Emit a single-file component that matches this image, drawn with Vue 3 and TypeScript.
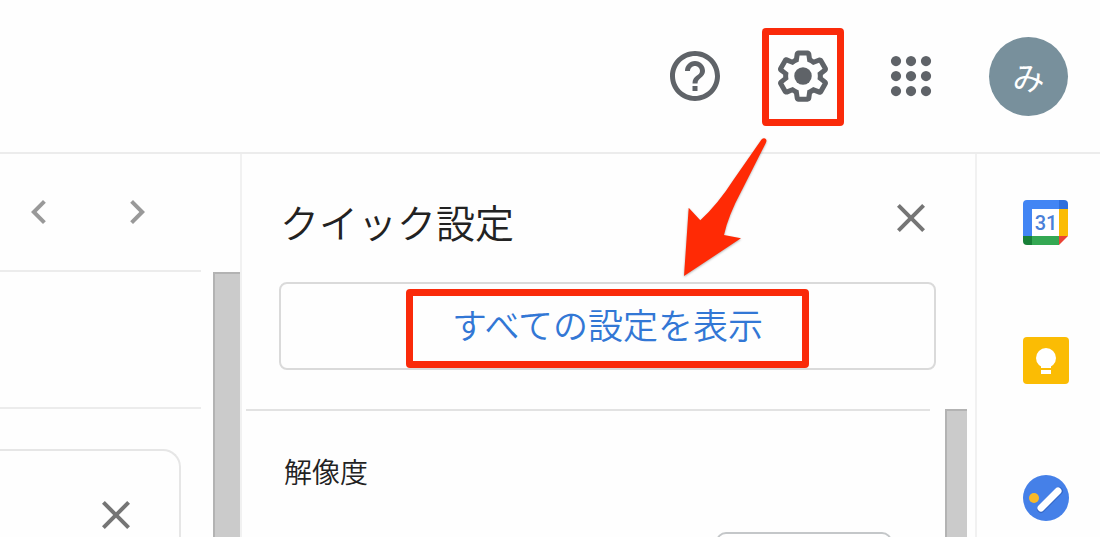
<script setup lang="ts">
interface AddOn {
  id: 'calendar' | 'keep' | 'tasks'
  label: string
}

const addOns: AddOn[] = [
  { id: 'calendar', label: 'カレンダー' },
  { id: 'keep', label: 'Keep' },
  { id: 'tasks', label: 'ToDo リスト' },
]

const dots: number[] = [6, 12, 18]
const closePath = 'M19 6.41 17.59 5 12 10.59 6.41 5 5 6.41 10.59 12 5 17.59 6.41 19 12 13.41 17.59 19 19 17.59 13.41 12z'
</script>

<template>
  <div class="page">
    <header class="topbar">
      <button class="icon-btn large" type="button" aria-label="サポート">
        <svg viewBox="0 0 24 24">
          <path d="M11 18h2v-2h-2v2zm1-16C6.48 2 2 6.48 2 12s4.48 10 10 10 10-4.48 10-10S17.52 2 12 2zm0 18c-4.41 0-8-3.59-8-8s3.59-8 8-8 8 3.59 8 8-3.59 8-8 8zm0-14c-2.21 0-4 1.79-4 4h2c0-1.1.9-2 2-2s2 .9 2 2c0 2-3 1.75-3 5h2c0-2.25 3-2.5 3-5 0-2.21-1.79-4-4-4z" />
        </svg>
      </button>
      <div class="gear-wrap">
        <button class="icon-btn large" type="button" aria-label="設定">
          <svg viewBox="0 0 24 24">
            <path d="M13.85 22.25h-3.7c-.74 0-1.36-.54-1.45-1.27l-.27-1.89c-.27-.14-.53-.29-.79-.46l-1.8.72c-.7.26-1.47-.03-1.81-.65L2.2 15.53c-.35-.66-.2-1.44.36-1.88l1.53-1.19c-.01-.15-.02-.3-.02-.46 0-.15.01-.31.02-.46l-1.52-1.19c-.59-.45-.74-1.26-.37-1.88l1.85-3.19c.34-.62 1.11-.9 1.79-.63l1.81.73c.26-.17.52-.32.78-.46l.27-1.91c.09-.7.71-1.25 1.44-1.25h3.7c.74 0 1.36.54 1.45 1.27l.27 1.89c.27.14.53.29.79.46l1.8-.72c.71-.26 1.48.03 1.82.65l1.84 3.18c.36.66.2 1.44-.36 1.88l-1.52 1.19c.01.15.02.3.02.46s-.01.31-.02.46l1.52 1.19c.56.45.72 1.23.37 1.86l-1.86 3.22c-.34.62-1.11.9-1.8.63l-1.8-.72c-.26.17-.52.32-.78.46l-.27 1.91c-.1.68-.72 1.22-1.46 1.22zm-3.23-2h2.76l.37-2.55.53-.22c.44-.18.88-.44 1.34-.78l.45-.34 2.38.96 1.38-2.4-2.03-1.58.07-.56c.03-.26.06-.51.06-.78s-.03-.53-.06-.78l-.07-.56 2.03-1.58-1.39-2.4-2.39.96-.45-.35c-.42-.32-.87-.58-1.33-.77l-.52-.22-.37-2.55h-2.76l-.37 2.55-.53.21c-.44.19-.88.44-1.34.79l-.45.33-2.38-.95-1.39 2.39 2.03 1.58-.07.56a7 7 0 0 0-.06.79c0 .26.02.53.06.78l.07.56-2.03 1.58 1.38 2.4 2.39-.96.45.35c.43.33.86.58 1.33.77l.53.22.38 2.55z" />
            <circle cx="12" cy="12" r="3.5" />
          </svg>
        </button>
        <span class="gear-mark"></span>
        <svg class="arrow" viewBox="0 0 100 156" aria-hidden="true">
          <path d="M8 146 12.700 77.700 24.300 90.300Q42 74 58 49L85.500 9.500Q88 7 90 9.200 91 10.800 89.800 13L66 60Q52 86 48 105L65 108.300Z" />
        </svg>
      </div>
      <button class="icon-btn large" type="button" aria-label="Google アプリ">
        <svg viewBox="0 0 24 24">
          <template v-for="y in dots" :key="y">
            <circle v-for="x in dots" :key="x" :cx="x" :cy="y" r="2.050" />
          </template>
        </svg>
      </button>
      <button class="avatar" type="button">み</button>
    </header>

    <div class="body">
      <section class="mail">
        <div class="mail-content">
          <div class="pager">
            <button class="icon-btn" type="button" aria-label="前へ">
              <svg viewBox="0 0 24 24"><path d="M15.410 7.410 14 6l-6 6 6 6 1.410-1.410L10.830 12z" /></svg>
            </button>
            <button class="icon-btn" type="button" aria-label="次へ">
              <svg viewBox="0 0 24 24"><path d="M10 6 8.590 7.410 13.170 12l-4.580 4.590L10 18l6-6z" /></svg>
            </button>
          </div>
          <div class="tabs"></div>
          <div class="notice">
            <button class="icon-btn close" type="button" aria-label="閉じる">
              <svg viewBox="0 0 24 24"><path :d="closePath" /></svg>
            </button>
          </div>
        </div>
        <div class="scrollbar mail-scroll"></div>
      </section>

      <section class="panel">
        <div class="panel-head">
          <h2>クイック設定</h2>
          <button class="icon-btn close" type="button" aria-label="クイック設定を閉じる">
            <svg viewBox="0 0 24 24"><path :d="closePath" /></svg>
          </button>
        </div>
        <button class="all-settings" type="button"><span>すべての設定を表示</span></button>
        <div class="options">
          <div class="options-content">
            <h3>解像度</h3>
            <div class="preview"></div>
          </div>
          <div class="scrollbar"></div>
        </div>
      </section>

      <aside class="rail">
        <button v-for="item in addOns" :key="item.id" class="icon-btn" type="button" :aria-label="item.label">
          <svg v-if="item.id === 'calendar'" viewBox="0 0 48 48">
            <path fill="#4285f4" d="M5 1h32v9H10v27H1V5a4 4 0 0 1 4-4z" />
            <path fill="#2f6fdc" d="M37 1h5a4 4 0 0 1 4 4v5h-9z" />
            <path fill="#fbbc04" d="M37 10h9v27h-9z" />
            <path fill="#34a853" d="M10 37h27v9H10z" />
            <path fill="#188038" d="M1 37h9v9H5a4 4 0 0 1-4-4z" />
            <path fill="#ea4335" d="M37 37h9l-9 9z" />
            <path fill="#fff" d="M10 10h27v27H10z" />
            <text x="24" y="31" text-anchor="middle">31</text>
          </svg>
          <svg v-else-if="item.id === 'keep'" viewBox="0 0 48 48">
            <rect x="1" y="0" width="46" height="47" rx="4" fill="#fbbc04" />
            <circle cx="24" cy="21" r="10" fill="#fff" />
            <path fill="#fff" d="M19 27h10v4H19zM19 33h10v4H19z" />
          </svg>
          <svg v-else viewBox="0 0 48 48">
            <circle cx="24" cy="23" r="23" fill="#4580e8" />
            <path d="M19 34 37 16" stroke="#3568c9" stroke-width="8" stroke-linecap="round" />
            <path d="M19 33 36 16" stroke="#fff" stroke-width="7" stroke-linecap="round" />
            <circle cx="12" cy="23" r="5" fill="#f9b928" />
          </svg>
        </button>
      </aside>
    </div>
  </div>
</template>

<style>
body {
  margin: 0;
}
</style>

<style scoped>
.page {
  display: flex;
  flex-direction: column;
  height: 100vh;
  overflow: hidden;
  background: #fefefe;
  color: #222;
  font-family: "Noto Sans CJK JP", sans-serif;
}

button {
  padding: 0;
  border: 0;
  background: none;
  font: inherit;
  cursor: pointer;
}

h2,
h3 {
  margin: 0;
  font-weight: 350;
}

svg {
  display: block;
}

.topbar {
  display: flex;
  flex: none;
  align-items: center;
  justify-content: flex-end;
  gap: 48px;
  box-sizing: border-box;
  height: 154px;
  padding-right: 32px;
  border-bottom: 2px solid #ececec;
}

.icon-btn {
  flex: none;
  width: 48px;
  height: 48px;
}

.icon-btn svg {
  width: 100%;
  height: 100%;
}

.large {
  width: 60px;
  height: 60px;
  fill: #5f6368;
}

.gear-wrap {
  position: relative;
  z-index: 1;
  height: 60px;
}

.gear-mark {
  position: absolute;
  inset: -18px -11px -20px;
  border: 7px solid #fa2a0a;
  border-radius: 4px;
  pointer-events: none;
}

.arrow {
  position: absolute;
  top: 84px;
  left: -97px;
  width: 100px;
  height: 156px;
  fill: #ff2a05;
  filter: drop-shadow(0 1px 1px rgb(0 0 0 / 30%));
  pointer-events: none;
}

.avatar {
  flex: none;
  width: 79px;
  height: 79px;
  border-radius: 50%;
  background: #78909c;
  color: #fff;
  font-size: 32px;
  font-weight: 400;
  line-height: 40px;
}

.body {
  display: grid;
  flex: 1;
  grid-template-columns: 242px 1fr 125px;
  min-height: 0;
}

.mail {
  display: flex;
  min-height: 0;
  border-right: 2px solid #f1f1f1;
}

.mail-content {
  flex: 1;
}

.pager {
  display: flex;
  align-items: center;
  justify-content: flex-end;
  gap: 50px;
  height: 116px;
  padding-right: 40px;
  border-bottom: 2px solid #ececec;
  fill: #999;
}

.tabs {
  height: 135px;
  border-bottom: 2px solid #ececec;
}

.notice {
  display: flex;
  justify-content: flex-end;
  height: 120px;
  margin: 40px 20px 0 0;
  padding: 40px 39px 0 0;
  border: solid #e6e6e6;
  border-width: 2px 2px 0 0;
  border-top-right-radius: 18px;
}

.close {
  fill: #757575;
}

.scrollbar {
  flex: none;
  box-sizing: border-box;
  width: 22px;
  border: solid #b3b3b3;
  border-width: 2px 0 0 2px;
  background: #cbcbcb;
}

.mail-scroll {
  width: 27px;
  margin: 118px 0 0 12px;
}

.panel {
  display: flex;
  flex-direction: column;
  min-height: 0;
}

.panel-head {
  display: flex;
  align-items: flex-start;
  justify-content: space-between;
  margin: 40px 40px 34px 38px;
}

h2 {
  font-size: 39px;
  line-height: 54px;
}

.all-settings {
  display: flex;
  flex: none;
  align-items: center;
  justify-content: center;
  box-sizing: border-box;
  height: 88px;
  margin: 0 39px 39px 37px;
  padding-bottom: 4px;
  border: 2px solid #dadada;
  border-radius: 8px;
  color: #3277d5;
  font-size: 35px;
  font-weight: 350;
  line-height: 40px;
}

.all-settings span {
  position: relative;
}

.all-settings span::after {
  position: absolute;
  inset: -15px -46px -24px;
  border: 7px solid #fa2a0a;
  border-radius: 4px;
  content: "";
}

.options {
  display: flex;
  flex: 1;
  gap: 15px;
  min-height: 0;
  padding: 0 8px 0 4px;
}

.options-content {
  flex: 1;
  padding: 40px 38px 0;
  border-top: 2px solid #e2e2e2;
}

h3 {
  font-size: 28px;
  line-height: 40px;
}

.preview {
  width: 172px;
  height: 100px;
  margin: 41px 0 0 auto;
  border: 2px solid #c4c7c9;
  border-radius: 10px;
}

.rail {
  display: flex;
  flex-direction: column;
  align-items: flex-start;
  gap: 90px;
  padding: 45px 0 0 45px;
  border-left: 2px solid #f1f1f1;
}

.rail text {
  fill: #4a80d8;
  font: 500 20px Roboto, sans-serif;
}
</style>
